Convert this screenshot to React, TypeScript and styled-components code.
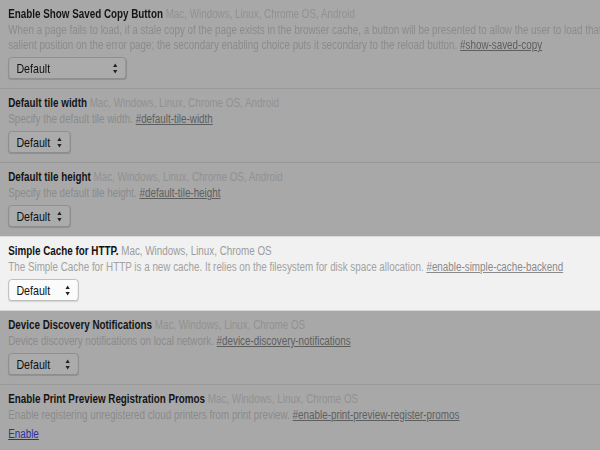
import styled, { createGlobalStyle } from 'styled-components';

interface Experiment {
  name: string;
  platforms: string;
  lines: string[];
  anchor: string;
  control: 'select' | 'enable';
  selectWidth?: number;
  active?: boolean;
}

// the screenshot is squeezed sideways, so the page is laid out wider and scaled down
const SQUEEZE = 0.82;

const experiments: Experiment[] = [
  {
    name: 'Enable Show Saved Copy Button',
    platforms: 'Mac, Windows, Linux, Chrome OS, Android',
    lines: [
      'When a page fails to load, if a stale copy of the page exists in the browser cache, a button will be presented to allow the user to load that stale copy. The primary enabling choice puts the button in the most',
      'salient position on the error page; the secondary enabling choice puts it secondary to the reload button.',
    ],
    anchor: '#show-saved-copy',
    control: 'select',
    selectWidth: 144,
  },
  {
    name: 'Default tile width',
    platforms: 'Mac, Windows, Linux, Chrome OS, Android',
    lines: ['Specify the default tile width.'],
    anchor: '#default-tile-width',
    control: 'select',
    selectWidth: 76,
  },
  {
    name: 'Default tile height',
    platforms: 'Mac, Windows, Linux, Chrome OS, Android',
    lines: ['Specify the default tile height.'],
    anchor: '#default-tile-height',
    control: 'select',
    selectWidth: 76,
  },
  {
    name: 'Simple Cache for HTTP.',
    platforms: 'Mac, Windows, Linux, Chrome OS',
    lines: ['The Simple Cache for HTTP is a new cache. It relies on the filesystem for disk space allocation.'],
    anchor: '#enable-simple-cache-backend',
    control: 'select',
    selectWidth: 86,
    active: true,
  },
  {
    name: 'Device Discovery Notifications',
    platforms: 'Mac, Windows, Linux, Chrome OS',
    lines: ['Device discovery notifications on local network.'],
    anchor: '#device-discovery-notifications',
    control: 'select',
    selectWidth: 86,
  },
  {
    name: 'Enable Print Preview Registration Promos',
    platforms: 'Mac, Windows, Linux, Chrome OS',
    lines: ['Enable registering unregistered cloud printers from print preview.'],
    anchor: '#enable-print-preview-register-promos',
    control: 'enable',
  },
];

const GlobalStyle = createGlobalStyle`
  body {
    margin: 0;
    background: #a8a8a8;
    overflow: hidden;
    font-family: "Liberation Sans", Arial, sans-serif;
  }
`;

export default function App() {
  return (
    <>
      <GlobalStyle />
      <Viewport>
        <Page>
          {experiments.map((exp) => (
            <Row key={exp.anchor} $active={exp.active}>
              <TitleLine>
                <Name $active={exp.active}>{exp.name}</Name> <Platforms $active={exp.active}>{exp.platforms}</Platforms>
              </TitleLine>
              {exp.lines.map((line, i) => (
                <Desc key={i} $active={exp.active}>
                  {line}
                  {i === exp.lines.length - 1 && (
                    <>
                      {' '}
                      <Permalink $active={exp.active} href={exp.anchor}>
                        {exp.anchor}
                      </Permalink>
                    </>
                  )}
                </Desc>
              ))}
              {exp.control === 'select' ? (
                <SelectBox $active={exp.active} style={{ width: exp.selectWidth }}>
                  <span>Default</span>
                  <Arrows viewBox="0 0 6 11">
                    <path d="M3 0.5 L5.6 4 H0.4 Z" />
                    <path d="M3 10.5 L5.6 7 H0.4 Z" />
                  </Arrows>
                </SelectBox>
              ) : (
                <EnableLink href="#">Enable</EnableLink>
              )}
            </Row>
          ))}
        </Page>
      </Viewport>
    </>
  );
}

const Viewport = styled.div`
  width: 600px;
  height: 450px;
  overflow: hidden;
`;

const Page = styled.div`
  display: flex;
  flex-direction: column;
  width: ${Math.round(600 / SQUEEZE)}px;
  transform: scaleX(${SQUEEZE});
  transform-origin: 0 0;
`;

const Row = styled.div<{ $active?: boolean }>`
  display: flex;
  flex-direction: column;
  align-items: flex-start;
  padding: 6px 10px 9px;
  background: ${({ $active }) => ($active ? '#f1f1f1' : '#a8a8a8')};
  border-bottom: 1px solid ${({ $active }) => ($active ? '#d6d6d6' : '#989898')};
  border-top: ${({ $active }) => ($active ? '1px solid #dadada' : 'none')};
  margin-top: ${({ $active }) => ($active ? '-1px' : '0')};
`;

const TitleLine = styled.div`
  font-size: 12px;
  line-height: 17px;
  white-space: nowrap;
`;

const Name = styled.span<{ $active?: boolean }>`
  font-weight: bold;
  color: ${({ $active }) => ($active ? '#111' : '#151515')};
`;

const Platforms = styled.span<{ $active?: boolean }>`
  color: ${({ $active }) => ($active ? '#9c9c9c' : '#919191')};
`;

const Desc = styled.div<{ $active?: boolean }>`
  font-size: 12px;
  line-height: 15px;
  white-space: nowrap;
  color: ${({ $active }) => ($active ? '#a2a2a2' : '#8b8b8b')};
`;

const Permalink = styled.a<{ $active?: boolean }>`
  color: ${({ $active }) => ($active ? '#8a8a8a' : '#5e5e5e')};
  text-decoration: underline;
`;

const SelectBox = styled.div<{ $active?: boolean }>`
  box-sizing: border-box;
  display: flex;
  align-items: center;
  justify-content: space-between;
  height: 22px;
  margin-top: 4px;
  padding: 0 9px;
  border: 1px solid ${({ $active }) => ($active ? '#b9b9b9' : '#8c8c8c')};
  border-radius: 4px;
  background: ${({ $active }) => ($active ? '#fbfbfb' : '#ababab')};
  box-shadow: 0 1px 1px ${({ $active }) => ($active ? 'rgba(0, 0, 0, 0.12)' : 'rgba(0, 0, 0, 0.15)')};
  font-size: 13px;
  color: #111;
`;

const Arrows = styled.svg`
  width: 7px;
  height: 11px;
  fill: #222;
`;

const EnableLink = styled.a`
  margin-top: 3px;
  font-size: 12px;
  line-height: 16px;
  color: #2e2ea6;
  text-decoration: underline;
`;
